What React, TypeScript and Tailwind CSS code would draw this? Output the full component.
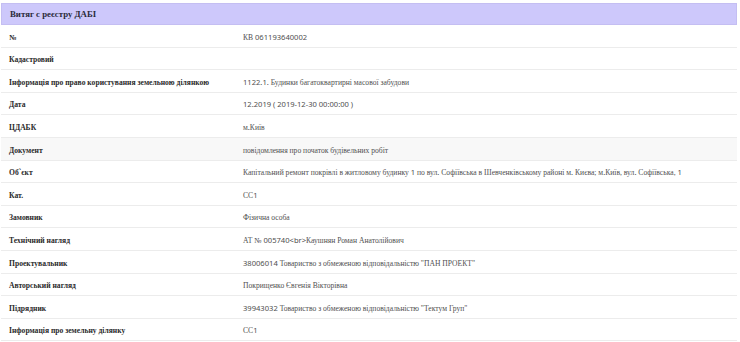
import React from "react";

type Row = { label: string; value: string; hover?: boolean };

const rows: Row[] = [
  { label: "№", value: "КВ 061193640002" },
  { label: "Кадастровий", value: "" },
  {
    label: "Інформація про право користування земельною ділянкою",
    value: "1122.1. Будинки багатоквартирні масової забудови",
  },
  { label: "Дата", value: "12.2019 ( 2019-12-30 00:00:00 )" },
  { label: "ЦДАБК", value: "м.Київ" },
  { label: "Документ", value: "повідомлення про початок будівельних робіт", hover: true },
  {
    label: "Об`єкт",
    value:
      "Капітальний ремонт покрівлі в житловому будинку 1 по вул. Софіївська в Шевченківському районі м. Києва; м.Київ, вул. Софіївська, 1",
  },
  { label: "Кат.", value: "СС1" },
  { label: "Замовник", value: "Фізична особа" },
  { label: "Технічний нагляд", value: "АТ № 005740<br>Каушнян Роман Анатолійович" },
  {
    label: "Проектувальник",
    value: '38006014 Товариство з обмеженою відповідальністю "ПАН ПРОЕКТ"',
  },
  { label: "Авторський нагляд", value: "Покрищенко Євгенія Вікторівна" },
  {
    label: "Підрядник",
    value: '39943032 Товариство з обмеженою відповідальністю "Тектум Груп"',
  },
  { label: "Інформація про земельну ділянку", value: "СС1" },
];

// digits and latin come out in the sans face, cyrillic falls back to serif
const Mixed = ({ text }: { text: string }) => {
  const parts = text.split(/([0-9A-Za-z().:<>\/-]+)/g);
  return (
    <>
      {parts.map((p, i) =>
        /^[0-9A-Za-z().:<>\/-]+$/.test(p) ? (
          <span key={i} className="[font-family:'Noto_Sans',sans-serif] text-[7.6px]">
            {p}
          </span>
        ) : (
          <span key={i}>{p}</span>
        )
      )}
    </>
  );
};

const App = () => {
  return (
    <div className="min-h-[342px] bg-white pt-[3px] pl-[1px] [font-family:'Liberation_Serif',serif] text-[7.6px]">
      <div className="w-[736px]">
        <div className="flex h-[22px] items-center border border-[#c4bef2] bg-[#cdc8fb] pl-[8px] pt-[1px] text-[8.8px] font-bold text-[#2b2b3a]">
          Витяг с реєстру ДАБІ
        </div>
        {rows.map((row) => (
          <div
            key={row.label + row.value}
            className={
              row.hover
                ? "grid h-[22.6px] grid-cols-[242px_1fr] items-center border-b border-[#ececec] bg-[#f8f8f8] pt-[3px]"
                : "grid h-[22.6px] grid-cols-[242px_1fr] items-center border-b border-[#ececec] bg-white pt-[3px]"
            }
          >
            <div className="pl-[8px] font-bold text-[#2a2a2a]">{row.label}</div>
            <div className="whitespace-nowrap text-[#505050]">
              <Mixed text={row.value} />
            </div>
          </div>
        ))}
      </div>
    </div>
  );
};

export default App;
